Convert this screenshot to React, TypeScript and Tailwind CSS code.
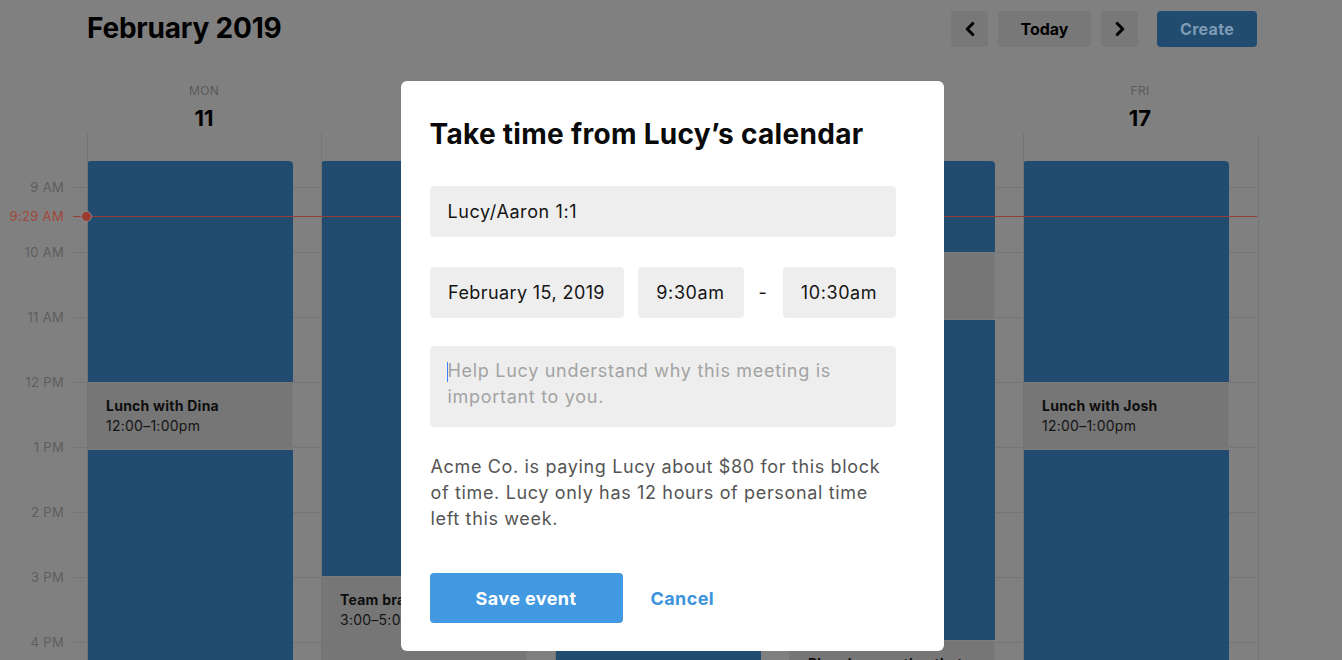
import { ChevronLeft, ChevronRight } from "lucide-react";

const hours = ["9 AM", "10 AM", "11 AM", "12 PM", "1 PM", "2 PM", "3 PM", "4 PM", "5 PM"];

type Block = { kind: "busy" | "free"; h: number; title?: string; time?: string; top?: boolean };

const days: { name: string; date: string; blocks: Block[] }[] = [
  {
    name: "MON",
    date: "11",
    blocks: [
      { kind: "busy", h: 221, top: true },
      { kind: "free", h: 68, title: "Lunch with Dina", time: "12:00–1:00pm" },
      { kind: "busy", h: 300 },
    ],
  },
  {
    name: "TUE",
    date: "12",
    blocks: [
      { kind: "busy", h: 415, top: true },
      { kind: "free", h: 130, title: "Team brainstorm", time: "3:00–5:00pm" },
    ],
  },
  {
    name: "WED",
    date: "13",
    blocks: [{ kind: "busy", h: 600, top: true }],
  },
  {
    name: "THU",
    date: "14",
    blocks: [
      { kind: "busy", h: 91, top: true },
      { kind: "free", h: 68 },
      { kind: "busy", h: 320 },
      { kind: "free", h: 130, title: "Planning meeting that", time: "4:00–6:00pm" },
    ],
  },
  {
    name: "FRI",
    date: "17",
    blocks: [
      { kind: "busy", h: 221, top: true },
      { kind: "free", h: 68, title: "Lunch with Josh", time: "12:00–1:00pm" },
      { kind: "busy", h: 300 },
    ],
  },
];

const font = { fontFamily: "Inter, 'Noto Sans', sans-serif" };

function EventBlock({ b }: { b: Block }) {
  if (b.kind === "busy") {
    return <div className={`-ml-px w-[206px] shrink-0 bg-[#214c6f] ${b.top ? "rounded-t-[4px]" : ""}`} style={{ height: b.h }} />;
  }
  return (
    <div className="-ml-px w-[206px] shrink-0 border border-[#7c7c7c] bg-[#767676] pl-[18px] pt-[13px] tracking-[0.25px]" style={{ height: b.h }}>
      {b.title && <div className="text-[14px] font-bold leading-[20px] text-[#0d0d0d] whitespace-nowrap">{b.title}</div>}
      {b.time && <div className="text-[14px] leading-[20px] text-[#141414]">{b.time}</div>}
    </div>
  );
}

export default function App() {
  return (
    <div className="relative h-[660px] w-[1342px] overflow-hidden bg-[#808080]" style={font}>
      {/* top bar */}
      <header className="flex h-[58px] items-start justify-between pl-[87px] pr-[85px] pt-[11px]">
        <h1 className="text-[28px] font-bold leading-[34px] tracking-[-0.2px] text-black">February 2019</h1>
        <div className="flex items-center">
          <button className="flex h-9 w-[37px] items-center justify-center rounded-[4px] bg-[#787878] text-black">
            <ChevronLeft size={22} strokeWidth={3.4} />
          </button>
          <button className="ml-[10px] h-9 w-[93px] rounded-[4px] bg-[#787878] text-[16px] font-bold text-black">Today</button>
          <button className="ml-[10px] flex h-9 w-[37px] items-center justify-center rounded-[4px] bg-[#787878] text-black">
            <ChevronRight size={22} strokeWidth={3.4} />
          </button>
          <button className="ml-[19px] h-9 w-[100px] rounded-[4px] bg-[#214c6f] text-[16px] font-bold tracking-[0.3px] text-[#7e9bb4]">Create</button>
        </div>
      </header>

      {/* day headers */}
      <div className="flex h-[75px] pl-[87px]">
        {days.map((d) => (
          <div key={d.name} className="flex w-[234px] flex-col items-center pt-[25px]">
            <div className="text-[12px] leading-[16px] tracking-wide text-[#5a5a5a]">{d.name}</div>
            <div className="mt-[5px] text-[22px] font-bold leading-[28px] text-black">{d.date}</div>
          </div>
        ))}
      </div>

      {/* grid body */}
      <div className="relative h-[527px]">
        <div className="absolute inset-0 flex flex-col pt-[54px]">
          {hours.map((h) => (
            <div key={h} className="flex h-[65px] shrink-0">
              <div className="-mt-[9px] w-[64px] text-right text-[13px] leading-[18px] tracking-wide text-[#5e5e5e]">{h}</div>
              <div className="ml-[9px] w-[1184px] border-t border-[#757575]" />
            </div>
          ))}
        </div>

        <div className="relative flex h-full pl-[87px]">
          {days.map((d, i) => (
            <div
              key={d.name}
              className={`flex h-full w-[234px] shrink-0 flex-col overflow-hidden border-l border-[#757575] pt-[28px] ${i === days.length - 1 ? "box-content border-r" : ""}`}
            >
              {d.blocks.map((b, j) => (
                <EventBlock key={j} b={b} />
              ))}
            </div>
          ))}
        </div>

        {/* now indicator */}
        <div className="absolute left-0 top-[83px] flex h-0 w-[1257px] items-center">
          <div className="w-[64px] text-right text-[13px] leading-[18px] tracking-wide text-[#a2463b]">9:29 AM</div>
          <div className="relative ml-[9px] h-px flex-1 bg-[#933f36]">
            <div className="absolute left-[8px] top-[-5px] h-[11px] w-[11px] rounded-full border border-[#8a8a8a] bg-[#9b3b30]" />
          </div>
        </div>
      </div>

      {/* modal */}
      <div className="absolute inset-0 flex justify-center pl-[2px] pt-[81px]">
        <div className="h-[570px] w-[543px] rounded-[6px] bg-white pl-[29px] pr-[48px] pt-[35px]">
          <h2 className="whitespace-nowrap text-[28px] font-bold leading-[36px] tracking-[0.3px] text-[#0a0a0a]">Take time from Lucy’s calendar</h2>

          <div className="tracking-[0.6px]">
            <div className="mt-[34px] flex h-[51px] items-center rounded-[4px] bg-[#eeeeee] px-[18px] text-[18px] text-[#151515]">Lucy/Aaron 1:1</div>

            <div className="mt-[30px] flex h-[51px] items-center text-[18px] text-[#151515]">
              <div className="flex h-full w-[194px] items-center justify-center rounded-[4px] bg-[#eeeeee] tracking-[0.4px]">February 15, 2019</div>
              <div className="ml-[14px] flex h-full w-[106px] items-center justify-center rounded-[4px] bg-[#eeeeee]">9:30am</div>
              <div className="w-[39px] text-center">-</div>
              <div className="flex h-full w-[113px] items-center justify-center rounded-[4px] bg-[#eeeeee]">10:30am</div>
            </div>

            <div className="relative mt-[28px] h-[81px] rounded-[4px] bg-[#eeeeee] pl-[18px] pr-[20px] pt-[12px] text-[18px] leading-[26px] tracking-[0.7px] text-[#a3a3a3]">
              <span className="absolute left-[17px] top-[16px] h-[20px] w-px bg-[#3b82f6]" />
              Help Lucy understand why this meeting is important to you.
            </div>

            <p className="mt-[27px] pl-px text-[18px] leading-[26px] tracking-[0.65px] text-[#555555]">
              Acme Co. is paying Lucy about $80 for this block of time. Lucy only has 12 hours of personal time left this week.
            </p>

            <div className="mt-[41px] flex items-center">
              <button className="h-[50px] w-[193px] rounded-[4px] bg-[#4299e1] text-[18px] font-bold tracking-[0.4px] text-white">Save event</button>
              <button className="ml-[28px] text-[18px] font-bold tracking-[0.4px] text-[#3d94dc]">Cancel</button>
            </div>
          </div>
        </div>
      </div>
    </div>
  );
}
